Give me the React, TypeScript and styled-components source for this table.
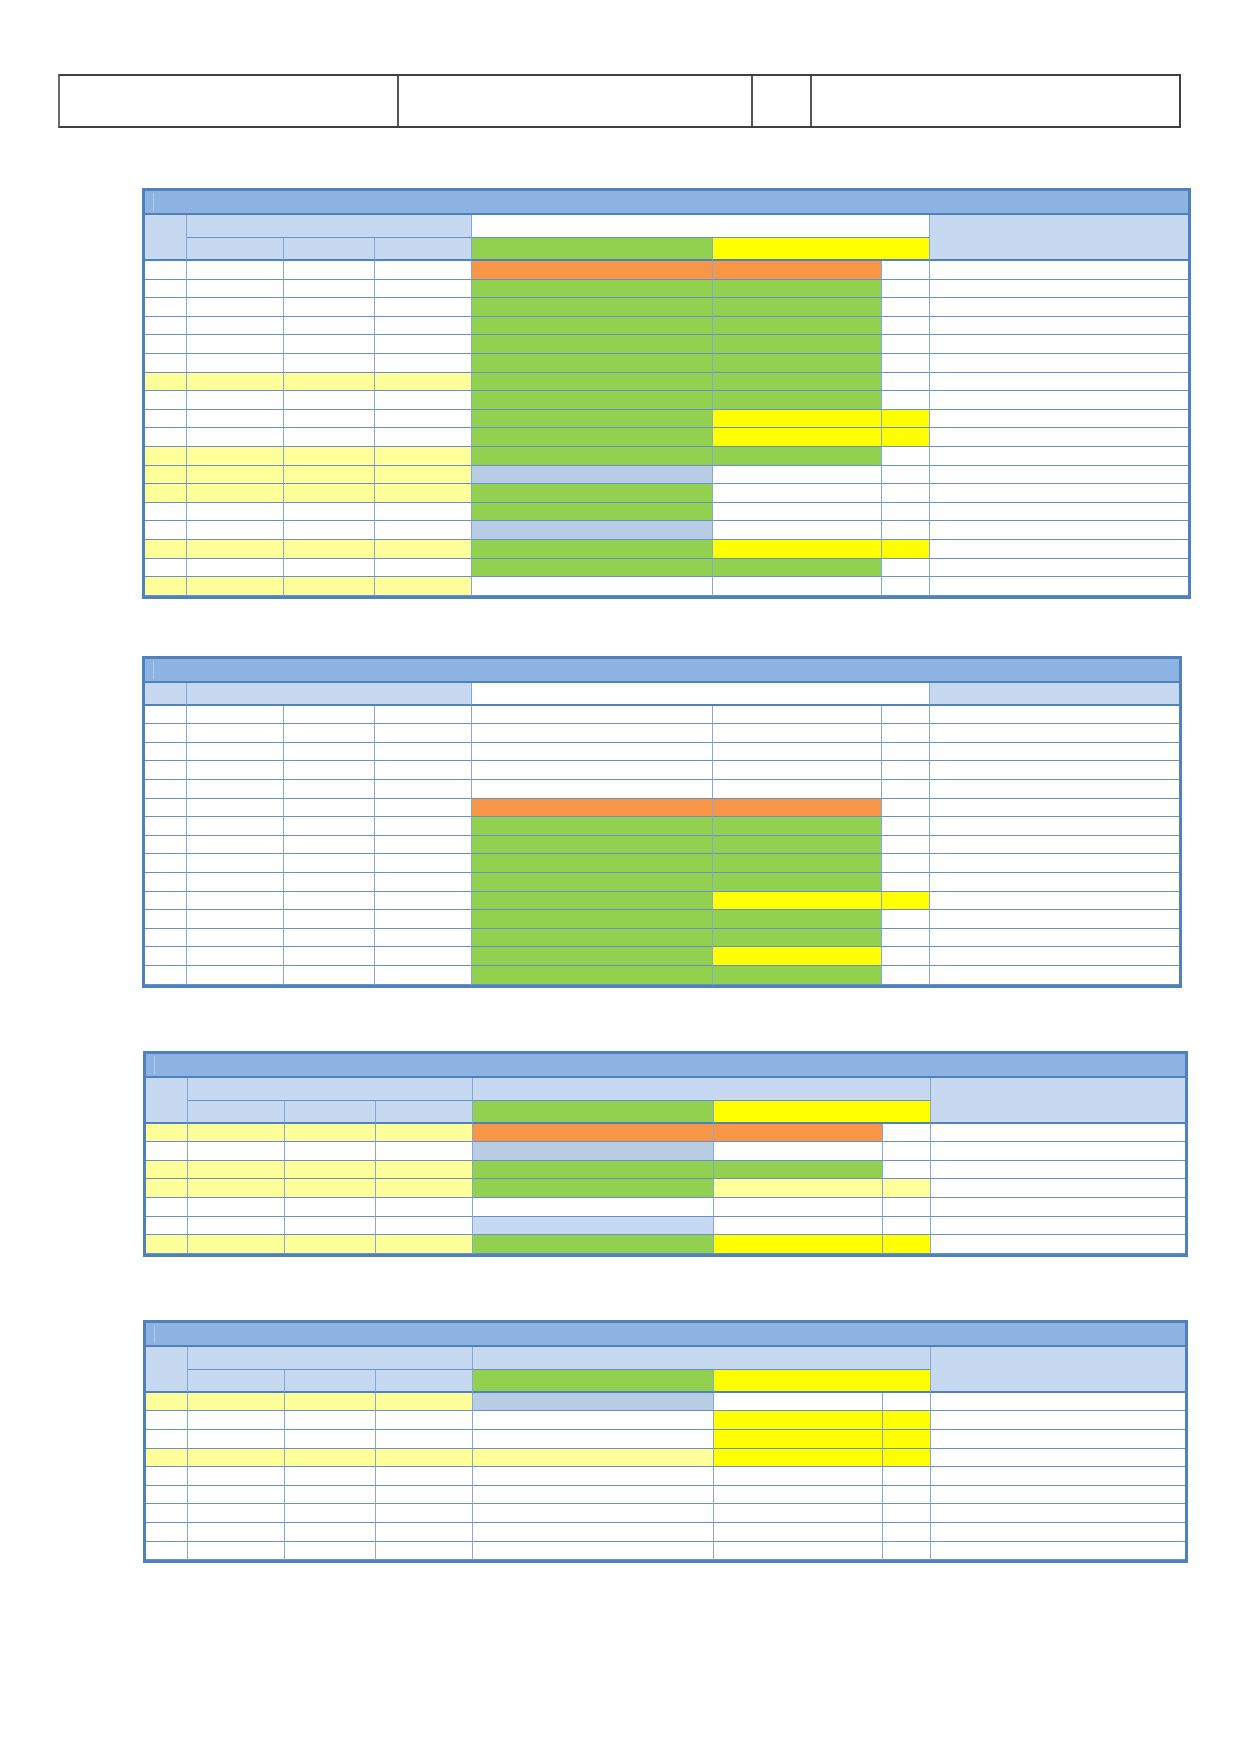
import React from 'react';
import styled, { createGlobalStyle } from 'styled-components';

const GlobalStyle = createGlobalStyle`
  html, body { margin: 0; padding: 0; background: #ffffff; }
  body { font-family: "Liberation Sans", Arial, sans-serif; }
`;

const COLORS: Record<string, string> = {
  W: '#ffffff',
  Y: '#ffff00',
  L: '#ffff99',
  G: '#92d050',
  O: '#f79646',
  B: '#b8cce4',
  C: '#c6d9f1',
};

const HEAD = '#c6d9f1';
const LINE = '#86a8d6';
const HLINE = '#6890c6';
const DARK = '#4f81bd';

const Page = styled.div`
  padding-top: 74px;
  min-height: 1752px;
  box-sizing: border-box;
  display: flex;
  flex-direction: column;
  align-items: flex-start;
`;

const TopBox = styled.div`
  margin-left: 58px;
  width: 1123px;
  height: 54px;
  box-sizing: border-box;
  border: 2px solid #3f3f3f;
  border-left-color: #6b6b6b;
  display: grid;
  grid-template-columns: 339px 354px 59px 1fr;
`;

const TopCell = styled.div<{ $last?: boolean }>`
  box-sizing: border-box;
  border-right: ${(p) => (p.$last ? 'none' : '2px solid #555555')};
`;

const Section = styled.section<{ $gap: number; $left: number }>`
  margin-top: ${(p) => p.$gap}px;
  margin-left: ${(p) => p.$left}px;
`;

const Table = styled.div<{ $width: number }>`
  width: ${(p) => p.$width}px;
  box-sizing: border-box;
  border: 3px solid ${DARK};
  display: grid;
  grid-template-columns: 42px 97px 91px 97px 241px 169px 48px 1fr;
  background: #ffffff;
`;

const Title = styled.div`
  grid-column: 1 / -1;
  grid-row: 1;
  position: relative;
  height: 24px;
  box-sizing: border-box;
  background: #8db3e2;
  border-bottom: 2px solid ${DARK};
  &::before {
    content: '';
    position: absolute;
    left: 8px;
    top: 2px;
    bottom: 2px;
    width: 1px;
    background: rgba(255, 255, 255, 0.3);
  }
`;

const HeadCell = styled.div<{
  $col: string;
  $row: string;
  $bg: string;
  $thick?: boolean;
  $last?: boolean;
  $h?: number;
}>`
  grid-column: ${(p) => p.$col};
  grid-row: ${(p) => p.$row};
  ${(p) => (p.$h ? `height: ${p.$h}px;` : '')}
  box-sizing: border-box;
  background: ${(p) => p.$bg};
  border-right: ${(p) => (p.$last ? 'none' : `1px solid ${LINE}`)};
  border-bottom: ${(p) => (p.$thick ? `2px solid ${DARK}` : `1px solid ${HLINE}`)};
`;

const Cell = styled.div<{ $bg: string; $last?: boolean }>`
  height: 18.6px;
  box-sizing: border-box;
  background: ${(p) => p.$bg};
  border-right: ${(p) => (p.$last ? 'none' : `1px solid ${LINE}`)};
  border-bottom: 1px solid ${HLINE};
`;

type RowSpec = string; // 4 chars: left, c5, c6, c7

const DataRows: React.FC<{ rows: RowSpec[] }> = ({ rows }) => (
  <>
    {rows.map((r, i) => {
      const left = COLORS[r[0]];
      const c5 = COLORS[r[1]];
      const c6 = COLORS[r[2]];
      const c7 = COLORS[r[3]];
      return (
        <React.Fragment key={i}>
          <Cell $bg={left} />
          <Cell $bg={left} />
          <Cell $bg={left} />
          <Cell $bg={left} />
          <Cell $bg={c5} />
          <Cell $bg={c6} />
          <Cell $bg={c7} />
          <Cell $bg="#ffffff" $last />
        </React.Fragment>
      );
    })}
  </>
);

const DoubleHeader: React.FC<{ middle: string }> = ({ middle }) => (
  <>
    <HeadCell $col="1" $row="2 / 4" $bg={HEAD} $thick />
    <HeadCell $col="2 / 5" $row="2" $bg={HEAD} $h={23} />
    <HeadCell $col="5 / 8" $row="2" $bg={middle} $h={23} />
    <HeadCell $col="8" $row="2 / 4" $bg={HEAD} $thick $last />
    <HeadCell $col="2" $row="3" $bg={HEAD} $thick $h={23} />
    <HeadCell $col="3" $row="3" $bg={HEAD} $thick $h={23} />
    <HeadCell $col="4" $row="3" $bg={HEAD} $thick $h={23} />
    <HeadCell $col="5" $row="3" $bg={COLORS.G} $thick $h={23} />
    <HeadCell $col="6 / 8" $row="3" $bg={COLORS.Y} $thick $h={23} />
  </>
);

const SingleHeader: React.FC = () => (
  <>
    <HeadCell $col="1" $row="2" $bg={HEAD} $thick $h={23} />
    <HeadCell $col="2 / 5" $row="2" $bg={HEAD} $thick $h={23} />
    <HeadCell $col="5 / 8" $row="2" $bg="#ffffff" $thick $h={23} />
    <HeadCell $col="8" $row="2" $bg={HEAD} $thick $last $h={23} />
  </>
);

const table1: RowSpec[] = [
  'WOOW', 'WGGW', 'WGGW', 'WGGW', 'WGGW', 'WGGW',
  'LGGW', 'WGGW', 'WGYY', 'WGYY', 'LGGW', 'LBWW',
  'LGWW', 'WGWW', 'WBWW', 'LGYY', 'WGGW', 'LWWW',
];

const table2: RowSpec[] = [
  'WWWW', 'WWWW', 'WWWW', 'WWWW', 'WWWW',
  'WOOW', 'WGGW', 'WGGW', 'WGGW', 'WGGW',
  'WGYY', 'WGGW', 'WGGW', 'WGYW', 'WGGW',
];

const table3: RowSpec[] = ['LOOW', 'WBWW', 'LGGW', 'LGLL', 'WWWW', 'WCWW', 'LGYY'];

const table4: RowSpec[] = [
  'LBWW', 'WWYY', 'WWYY', 'LLYY', 'WWWW', 'WWWW', 'WWWW', 'WWWW', 'WWWW',
];

export default function App() {
  return (
    <>
      <GlobalStyle />
      <Page>
        <TopBox>
          <TopCell />
          <TopCell />
          <TopCell />
          <TopCell $last />
        </TopBox>

        <Section $gap={60} $left={142}>
          <Table $width={1049}>
            <Title />
            <DoubleHeader middle="#ffffff" />
            <DataRows rows={table1} />
          </Table>
        </Section>

        <Section $gap={57} $left={142}>
          <Table $width={1040}>
            <Title />
            <SingleHeader />
            <DataRows rows={table2} />
          </Table>
        </Section>

        <Section $gap={63} $left={143}>
          <Table $width={1045}>
            <Title />
            <DoubleHeader middle={HEAD} />
            <DataRows rows={table3} />
          </Table>
        </Section>

        <Section $gap={63} $left={143}>
          <Table $width={1045}>
            <Title />
            <DoubleHeader middle={HEAD} />
            <DataRows rows={table4} />
          </Table>
        </Section>
      </Page>
    </>
  );
}
